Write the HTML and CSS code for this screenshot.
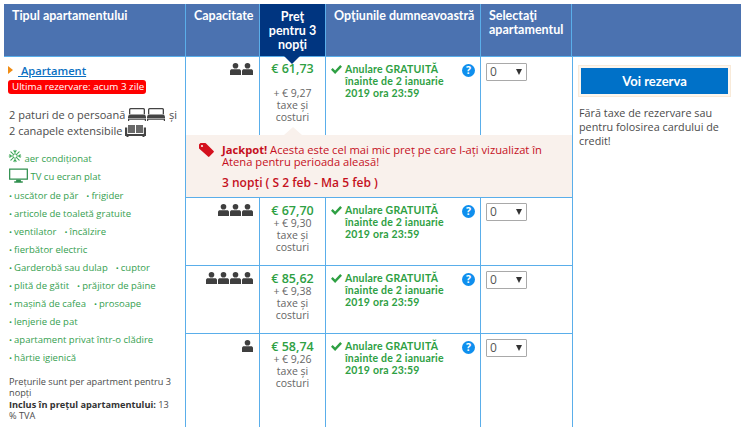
FILE: index.html
```html
<!DOCTYPE html>
<html lang="ro">
<head>
<meta charset="utf-8">
<title>Apartament</title>
<link rel="stylesheet" href="styles.css">
</head>
<body>
<svg class="defs" width="0" height="0" aria-hidden="true">
  <defs>
    <symbol id="person" viewBox="0 0 11 12"><circle cx="5.500" cy="2.800" r="2.800"/><path d="M0 12V8C0 6.800 1 6.200 2 6.200h7c1 0 2 .6 2 1.800v4z"/></symbol>
    <symbol id="bed" viewBox="0 0 18 13"><path d="M2.500 0h13A1.500 1.500 0 0 1 17 1.500V6h-1.300V1.800a.5.5 0 0 0-.5-.5H2.800a.5.5 0 0 0-.5.5V6H1V1.500A1.500 1.500 0 0 1 2.500 0z"/><path d="M1 6.500h16l1 2.300V10H0V8.800z"/><path d="M0 10.600h18V13h-1.200v-1.200H1.200V13H0z"/></symbol>
    <symbol id="sofa" viewBox="0 0 21 12"><path d="M3 0h7v8H3zM11 0h7v8h-7z" opacity=".8"/><path d="M0 2.500h2.200V9h16.600V2.500H21V11h-1.500v1h-2v-1h-14v1h-2v-1H0z"/></symbol>
    <symbol id="check" viewBox="0 0 11 9"><path d="M0 4.800 1.700 3l2.400 2.400L9.200 0 11 1.700 4.100 9z"/></symbol>
  </defs>
</svg>
<main class="table">
  <header class="head">
    <div class="th th-type">Tipul apartamentului</div>
    <div class="th th-cap">Capacitate</div>
    <div class="th th-price">Preţ<br>pentru 3<br>nopţi</div>
    <div class="th th-opt">Opţiunile dumneavoastră</div>
    <div class="th th-sel">Selectaţi<br>apartamentul</div>
    <div class="th th-end"></div>
  </header>
  <div class="body">
    <section class="type">
      <div class="name"><span class="arrow"></span><a href="#">&nbsp;Apartament</a></div>
      <div class="urgent">Ultima rezervare: acum 3 zile</div>
      <p class="beds">2 paturi de o persoană
        <svg class="i-bed"><use href="#bed"/></svg><svg class="i-bed"><use href="#bed"/></svg> şi<br>
        2 canapele extensibile <svg class="i-sofa"><use href="#sofa"/></svg></p>
      <ul class="facil">
        <li class="plain snow"><svg class="i-snow" viewBox="0 0 16 16"><g fill="none" stroke="#3aa655" stroke-width="1.200" stroke-linecap="round"><path d="M8 6V1M8 10v5M6 8H1M10 8h5M6.500 6.500 3 3M9.500 9.500 13 13M9.500 6.500 13 3M6.500 9.500 3 13" stroke-dasharray="1.800 1"/><path d="M6.500 2 8 3.500 9.500 2M6.500 14 8 12.500 9.500 14M2 6.500 3.500 8 2 9.500M14 6.500 12.500 8 14 9.500"/></g></svg> aer condiţionat</li>
        <li class="plain tv"><svg class="i-tv" viewBox="0 0 20 15"><path d="M.7.700h18.600v10.600H.7z" fill="none" stroke="#2f8f4e" stroke-width="1.300"/><path d="M7.500 12h5v1.500h2V15h-9v-1.500h2z" fill="#2f8f4e"/></svg> TV cu ecran plat</li>
        <li><span>uscător de păr</span><span>frigider</span></li>
        <li><span>articole de toaletă gratuite</span></li>
        <li><span>ventilator</span><span>încălzire</span></li>
        <li><span>fierbător electric</span></li>
        <li><span>Garderobă sau dulap</span><span>cuptor</span></li>
        <li><span>plită de gătit</span><span>prăjitor de pâine</span></li>
        <li><span>maşină de cafea</span><span>prosoape</span></li>
        <li><span>lenjerie de pat</span></li>
        <li><span>apartament privat într-o clădire</span></li>
        <li><span>hârtie igienică</span></li>
      </ul>
      <p class="note">Preţurile sunt per apartment pentru 3 nopţi<br><b>Inclus în preţul apartamentului:</b> 13 % TVA</p>
    </section>
    <div class="rows">
      <div class="row row-first">
        <div class="cap"><svg class="i-p"><use href="#person"/></svg><svg class="i-p"><use href="#person"/></svg></div>
        <div class="price"><strong>€ 61,73</strong><span class="tax">+ € 9,27<br>taxe şi<br>costuri</span></div>
        <div class="opt"><svg class="i-check"><use href="#check"/></svg><div class="opt-text">Anulare GRATUITĂ<br>înainte de 2 ianuarie<br>2019 ora 23:59</div><span class="help">?</span></div>
        <div class="sel"><div class="select">0<i></i></div></div>
      </div>
      <div class="jackpot">
        <svg class="i-tag" viewBox="0 0 15 14"><path d="M0 1.500 1.500 0H6a1 1 0 0 1 .8.300l7.800 7.600a1 1 0 0 1 0 1.400l-4.200 4.300a1 1 0 0 1-1.400 0L.3 5.800A1 1 0 0 1 0 5z" fill="#d4111e"/><circle cx="3" cy="3" r="1.100" fill="#f9f1ec"/></svg>
        <div class="jp-text">
          <p class="jp-msg"><b>Jackpot!</b> Acesta este cel mai mic preț pe care l-ați vizualizat în Atena pentru perioada aleasă!</p>
          <p class="jp-date">3 nopți ( S 2 feb - Ma 5 feb )</p>
        </div>
      </div>
      <div class="row">
        <div class="cap"><svg class="i-p"><use href="#person"/></svg><svg class="i-p"><use href="#person"/></svg><svg class="i-p"><use href="#person"/></svg></div>
        <div class="price"><strong>€ 67,70</strong><span class="tax">+ € 9,30<br>taxe şi<br>costuri</span></div>
        <div class="opt"><svg class="i-check"><use href="#check"/></svg><div class="opt-text">Anulare GRATUITĂ<br>înainte de 2 ianuarie<br>2019 ora 23:59</div><span class="help">?</span></div>
        <div class="sel"><div class="select">0<i></i></div></div>
      </div>
      <div class="row">
        <div class="cap"><svg class="i-p"><use href="#person"/></svg><svg class="i-p"><use href="#person"/></svg><svg class="i-p"><use href="#person"/></svg><svg class="i-p"><use href="#person"/></svg></div>
        <div class="price"><strong>€ 85,62</strong><span class="tax">+ € 9,38<br>taxe şi<br>costuri</span></div>
        <div class="opt"><svg class="i-check"><use href="#check"/></svg><div class="opt-text">Anulare GRATUITĂ<br>înainte de 2 ianuarie<br>2019 ora 23:59</div><span class="help">?</span></div>
        <div class="sel"><div class="select">0<i></i></div></div>
      </div>
      <div class="row row-last">
        <div class="cap"><svg class="i-p"><use href="#person"/></svg></div>
        <div class="price"><strong>€ 58,74</strong><span class="tax">+ € 9,26<br>taxe şi<br>costuri</span></div>
        <div class="opt"><svg class="i-check"><use href="#check"/></svg><div class="opt-text">Anulare GRATUITĂ<br>înainte de 2 ianuarie<br>2019 ora 23:59</div><span class="help">?</span></div>
        <div class="sel"><div class="select">0<i></i></div></div>
      </div>
    </div>
    <aside class="book">
      <button class="btn" type="button">Voi rezerva</button>
      <p class="book-note">Fără taxe de rezervare sau pentru folosirea cardului de credit!</p>
    </aside>
  </div>
</main>
</body>
</html>
```
FILE: styles.css
```css
* { box-sizing: border-box; }
html, body { margin: 0; height: 427px; overflow: hidden; background: #fff; }
body { padding: 4px 0 0 4px; font-family: "Open Sans", "Noto Sans", sans-serif; font-size: 11px; color: #4b4b4b; }
.defs { position: absolute; }
p, ul { margin: 0; padding: 0; }

.table { display: flex; flex-direction: column; height: 423px; }
.head { display: grid; grid-template-columns: 182px 74px 66px 155px 91px 1fr; height: 53px; background: #4b72b0; border-bottom: 1px solid #5aaeea; }
.th { color: #fff; font-family: Lato, "Open Sans", sans-serif; font-weight: 700; font-size: 12.500px; line-height: 14px; padding: 5px 4px 0 8px; border-right: 1px solid #5aaeea; height: 52px; white-space: nowrap; }
.th-price { background: #003580; text-align: center; position: relative; padding: 6px 0 0; }
.th-price::after { content: ""; position: absolute; left: 24px; bottom: -8px; border: 8px solid transparent; border-top-color: #003580; border-bottom: 0; z-index: 2; }
.th-end { border-right: 0; }

.body { display: flex; flex: 1; min-height: 0; }
.type { width: 182px; border-right: 1px solid #5aaeea; padding: 6px 4px 0 4px; }
.name { display: flex; align-items: center; height: 14px; font-size: 11.200px; font-weight: 600; }
.arrow { width: 0; height: 0; border: 4.500px solid transparent; border-left: 5px solid #f08c14; border-right: 0; margin-top: -1px; }
.name a { color: #0a6fc2; margin-left: 5px; }
.urgent { display: block; width: 138px; margin-top: 3px; height: 14px; line-height: 13px; padding: 0 0 0 4px; background: #f00; color: #fff; border-radius: 3px; font-size: 9.800px; white-space: nowrap; }
.beds { margin-top: 13px; font-size: 11px; line-height: 16px; padding-left: 1px; white-space: nowrap; }
.i-bed { width: 18px; height: 13px; vertical-align: -2px; fill: #444; margin-right: 1px; }
.i-sofa { width: 21px; height: 12px; vertical-align: -2px; fill: #444; }

.facil { list-style: none; margin-top: 11px; padding-left: 1px; color: #35a04f; font-size: 9.500px; }
.facil li { display: flex; gap: 8px; height: 18px; line-height: 18px; white-space: nowrap; }
.facil li.plain { display: block; }
.facil li.snow { margin: -1px 0 1px; }
.facil li.tv { margin-bottom: 1px; }
.facil li span::before { content: "• "; font-size: 8px; }
.i-snow { width: 14px; height: 14px; vertical-align: -1px; margin-left: -1px; }
.i-tv { width: 19px; height: 15px; vertical-align: -3px; }
.note { margin-top: 9px; font-size: 9.200px; line-height: 11.300px; padding: 0 6px 0 1px; color: #4b4b4b; }
.note b { color: #333; }

.rows { width: 387px; display: flex; flex-direction: column; }
.row { display: grid; grid-template-columns: 74px 66px 155px 92px; border-bottom: 1px solid #5aaeea; height: 68px; }
.row > div { border-right: 1px solid #5aaeea; }
.row-first { height: 78px; border-bottom: 0; }
.row-last { flex: 1; border-bottom: 0; }
.cap { display: flex; justify-content: flex-end; padding: 6px 6px 0 0; gap: 1px; }
.i-p { width: 11px; height: 12px; fill: #3f3f3f; }
.price { text-align: center; padding-top: 6px; line-height: 12px; }
.price strong { display: block; color: #2ea043; font-size: 12.500px; font-weight: 600; line-height: 14px; }
.tax { display: block; margin-top: -1px; font-size: 10.500px; color: #666; }
.row-first .price { padding-top: 5px; }
.row-first .tax { margin-top: 11px; }
.opt { display: flex; padding: 6px 0 0 5px; position: relative; }
.i-check { width: 11px; height: 9px; fill: #2ea043; margin: 2px 3px 0 0; flex: none; }
.opt-text { color: #2ea043; font-family: Lato, "Open Sans", sans-serif; font-weight: 700; font-size: 10.500px; line-height: 12px; letter-spacing: .2px; white-space: nowrap; }
.help { position: absolute; top: 7px; right: 5px; width: 13px; height: 13px; border-radius: 50%; background: #0f8fee; color: #fff; font-size: 10.500px; font-weight: 700; line-height: 13px; text-align: center; }
.sel { padding: 5px 0 0 5px; }
.row-first .sel { padding-top: 6px; }
.select { position: relative; width: 41px; height: 18px; border: 1px solid #a9a9a9; border-radius: 1px; font-size: 12px; line-height: 16px; padding-left: 3px; color: #555; }
.select i { position: absolute; right: 4px; top: 5px; border: 3.500px solid transparent; border-top: 6px solid #333; border-bottom: 0; }

.jackpot { position: relative; height: 63px; background: #f9f1ec; border-bottom: 1px solid #5aaeea; border-right: 1px solid #5aaeea; display: flex; padding: 9px 8px 0 13px; color: #c5101d; }
.jackpot::before { content: ""; position: absolute; left: 98px; top: -8px; border: 9px solid transparent; border-bottom: 8px solid #f9f1ec; border-top: 0; }
.i-tag { width: 15px; height: 14px; flex: none; margin: -1px 8px 0 0; }
.jp-msg { font-size: 11.200px; line-height: 11.500px; }
.jp-msg b { font-weight: 700; }
.jp-date { margin-top: 9px; font-size: 12px; font-weight: 600; line-height: 14px; }

.book { flex: 1; padding: 9px 8px 0 6px; }
.btn { display: block; width: 151px; height: 30px; background: #0071c8; color: #fff; border: 2px solid #fdf6ee; outline: 1px solid #f8ead9; font-family: Lato, "Open Sans", sans-serif; font-weight: 700; font-size: 13px; padding: 0; }
.book-note { margin-top: 10px; font-size: 10.800px; line-height: 14px; width: 150px; }
```
